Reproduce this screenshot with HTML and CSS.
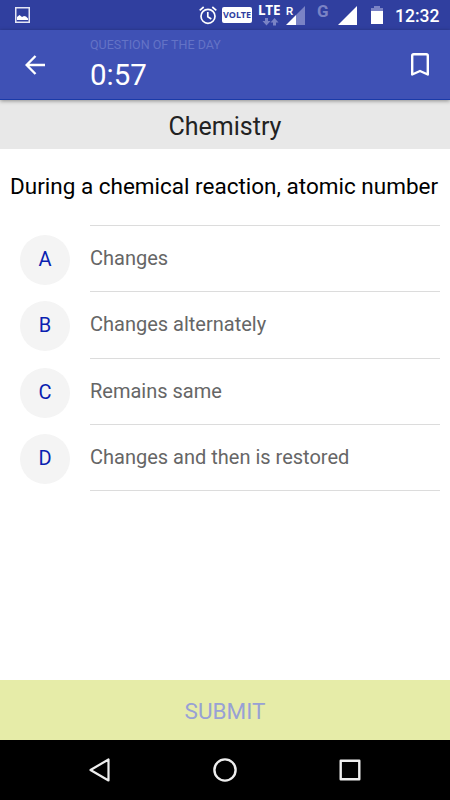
FILE: index.html
```html
<!DOCTYPE html>
<html lang="en">
  <head>
    <meta charset="UTF-8" />
    <meta name="viewport" content="width=device-width, initial-scale=1.0" />
    <title>Question of the day</title>
    <link rel="stylesheet" href="styles.css">
  </head>
  <body>
    <div class="status-bar">
      <svg class="picture" width="15" height="16" viewBox="0 0 15 16">
        <rect x="0.75" y="0.75" width="13.5" height="14.5" fill="none" stroke="#e4e6f4" stroke-width="1.5" />
        <path d="M2 13V10l2.500-2 2.500 2 2-1 2 0.500 2 2V13z" fill="#fff" />
      </svg>
      <svg class="alarm" width="18" height="19" viewBox="0 0 18 19" fill="none" stroke="#fff" stroke-width="1.700">
        <circle cx="9" cy="10.300" r="7" />
        <path d="M0.700 4.300L4.700 1M17.300 4.300L13.300 1M8.800 6v4.800l3.500 2.200" />
      </svg>
      <div class="volte">VOLTE</div>
      <div class="lte">
        <div class="lte-label">LTE</div>
        <svg width="17" height="8" viewBox="0 0 17 8">
          <path d="M3 0h3v3h2.500L4.500 7.500 0.500 3H3zM11 7.500h3v-3h2.500L12.500 0 8.500 4.500H11z" fill="#7a83c5" />
        </svg>
      </div>
      <div class="roaming">R</div>
      <svg class="signal-r" width="19" height="19" viewBox="0 0 19 19">
        <path d="M19 0V19H10V9z" fill="#7a83c5" />
        <path d="M10 9V19H0z" fill="#fff" />
      </svg>
      <div class="network">G</div>
      <svg class="signal" width="19" height="19" viewBox="0 0 19 19">
        <path d="M19 0V19H0z" fill="#fff" />
      </svg>
      <svg class="battery" width="12" height="18" viewBox="0 0 12 18">
        <path d="M0 5V2h3V0h6v2h3v3z" fill="#7a83c5" />
        <path d="M0 5h12v13H0z" fill="#fff" />
      </svg>
      <div class="clock">12:32</div>
    </div>

    <div class="app-bar">
      <svg class="back" width="20" height="20" viewBox="0 0 20 20" fill="none" stroke="#fff" stroke-width="2.400">
        <path d="M20 10H1.800M10.500 1L1.600 10l8.900 9" />
      </svg>
      <div class="titles">
        <div class="subtitle">QUESTION OF THE DAY</div>
        <div class="timer">0:57</div>
      </div>
      <svg class="bookmark" width="18" height="23" viewBox="0 0 18 23" fill="none" stroke="#fff" stroke-width="2.400" stroke-linejoin="round">
        <path d="M1.200 2.700Q1.200 1.200 2.700 1.200H15.300Q16.800 1.200 16.800 2.700V21.500L9 18 1.200 21.500z" />
      </svg>
    </div>

    <div class="subject">Chemistry</div>

    <div class="content">
      <div class="question">During a chemical reaction, atomic number</div>
      <div class="options">
        <div class="option">
          <div class="letter">A</div>
          <div class="answer">Changes</div>
        </div>
        <div class="option">
          <div class="letter">B</div>
          <div class="answer">Changes alternately</div>
        </div>
        <div class="option">
          <div class="letter">C</div>
          <div class="answer">Remains same</div>
        </div>
        <div class="option">
          <div class="letter">D</div>
          <div class="answer">Changes and then is restored</div>
        </div>
      </div>
    </div>

    <div class="submit">SUBMIT</div>

    <div class="nav-bar">
      <svg width="24" height="24" viewBox="0 0 24 24" fill="none" stroke="#eee" stroke-width="2.200" stroke-linejoin="round">
        <path d="M20.500 1.500v21L2.500 12z" />
      </svg>
      <svg width="24" height="24" viewBox="0 0 24 24" fill="none" stroke="#eee" stroke-width="2.400">
        <circle cx="12" cy="12" r="10.600" />
      </svg>
      <svg width="24" height="24" viewBox="0 0 24 24" fill="none" stroke="#eee" stroke-width="2.400" stroke-linejoin="round">
        <rect x="2.700" y="2.700" width="18.600" height="18.600" />
      </svg>
    </div>
  </body>
</html>
```
FILE: styles.css
```css
body {
  display: flex;
  flex-direction: column;
  width: 450px;
  height: 800px;
  margin: 0;
  overflow: hidden;
  background-color: #fff;
  font-family: Roboto, sans-serif;
}

svg {
  display: block;
  flex: none;
}

.status-bar {
  display: flex;
  align-items: flex-start;
  height: 30px;
  box-sizing: border-box;
  padding: 6px 0 0 15px;
  background-color: #303f9f;
  color: #fff;
}

.picture {
  margin-top: 1px;
}

.alarm {
  margin-left: 169px;
}

.volte {
  width: 30px;
  height: 16px;
  margin: 1px 0 0 5px;
  border-radius: 2px;
  background-color: #fff;
  color: #303f9f;
  font: 700 9px/16px "Noto Sans", sans-serif;
  text-align: center;
}

.lte {
  width: 24px;
  margin: -3px 0 0 6px;
}

.lte-label {
  font: 700 13.5px/15px "Noto Sans", sans-serif;
}

.lte svg {
  margin: 0 0 0 4px;
}

.roaming {
  width: 7px;
  margin-left: 4px;
  font: 700 10px/11px "Liberation Sans", sans-serif;
}

.signal-r {
  margin-left: -7px;
}

.network {
  width: 12px;
  margin: -5px 0 0 12px;
  color: #7a83c5;
  font-size: 17px;
  font-weight: 700;
  line-height: 20px;
}

.signal {
  margin-left: 9px;
}

.battery {
  margin-left: 14px;
}

.clock {
  margin-left: 12px;
  font-size: 17.5px;
  font-weight: 500;
  line-height: 20px;
}

.app-bar {
  display: flex;
  position: relative;
  height: 70px;
  box-sizing: border-box;
  padding: 0 21px 0 25px;
  border-bottom: 1px solid #1a3aa8;
  background-color: #3f51b5;
  box-shadow: 0 1px 4px rgba(0, 0, 0, 0.4);
  color: #fff;
}

.back {
  margin-top: 25px;
}

.titles {
  flex: 1;
  padding: 7px 0 0 45px;
}

.subtitle {
  color: #6473c6;
  font-size: 12.5px;
  line-height: 16px;
}

.timer {
  font-size: 29.5px;
  line-height: 44px;
}

.bookmark {
  margin-top: 23px;
}

.subject {
  height: 49px;
  background-color: #e8e8e8;
  color: #222;
  font-size: 25px;
  line-height: 53px;
  text-align: center;
}

.content {
  flex: 1;
  padding: 22px 10px 0;
}

.question {
  color: #000;
  font-size: 22.5px;
  line-height: 30px;
  white-space: nowrap;
}

.options {
  margin-top: 25px;
}

.option {
  display: flex;
  align-items: center;
  height: 66.25px;
  padding-left: 10px;
}

.letter {
  width: 50px;
  height: 50px;
  margin: 2px 20px 0 0;
  border-radius: 50%;
  background-color: #f4f4f4;
  color: #0a1fb0;
  font-size: 20px;
  line-height: 49px;
  text-align: center;
}

.answer {
  flex: 1;
  height: 100%;
  box-sizing: border-box;
  border-bottom: 1px solid #dcdcdc;
  color: #666;
  font-size: 20px;
  line-height: 65px;
}

.option:first-child .answer {
  box-shadow: 0 -1px #dcdcdc;
}

.submit {
  height: 60px;
  background-color: #e6eca8;
  color: #98a1d5;
  font-size: 22.5px;
  line-height: 62px;
  text-align: center;
}

.nav-bar {
  display: flex;
  align-items: center;
  justify-content: center;
  gap: 101px;
  height: 60px;
  background-color: #000;
}
```
